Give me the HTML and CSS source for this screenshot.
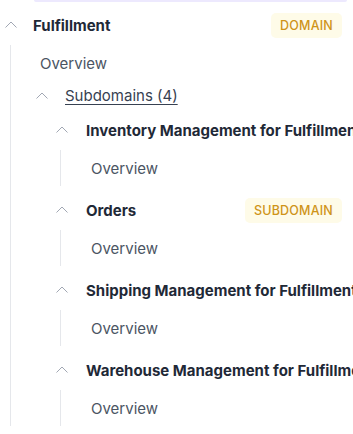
FILE: index.html
```html
<!DOCTYPE html>
<html lang="en">
<head>
    <meta charset="UTF-8">
    <meta name="viewport" content="width=device-width, initial-scale=1.0">
    <title>Fulfillment</title>
    <link rel="stylesheet" href="styles.css">
</head>
<body>
    <div class="prev-item"></div>

    <div class="tree">
        <div class="node">
            <div class="node-row domain-row">
                <span class="toggle">
                    <svg viewBox="0 0 16 16"><path d="M2.5 10.5 L8 5 L13.5 10.5"/></svg>
                </span>
                <span class="node-title">Fulfillment</span>
                <span class="badge">Domain</span>
            </div>

            <div class="children">
                <a class="leaf domain-leaf" href="#">Overview</a>

                <div class="group">
                    <div class="group-row">
                        <span class="toggle">
                            <svg viewBox="0 0 16 16"><path d="M2.5 10.5 L8 5 L13.5 10.5"/></svg>
                        </span>
                        <a class="group-link" href="#">Subdomains (4)</a>
                    </div>

                    <div class="group-items">
                        <div class="sub-node">
                            <div class="node-row sub-row">
                                <span class="toggle">
                                    <svg viewBox="0 0 16 16"><path d="M2.5 10.5 L8 5 L13.5 10.5"/></svg>
                                </span>
                                <span class="node-title">Inventory Management for Fulfillment</span>
                                <span class="badge">Subdomain</span>
                            </div>
                            <div class="sub-children">
                                <a class="leaf" href="#">Overview</a>
                            </div>
                        </div>

                        <div class="sub-node">
                            <div class="node-row sub-row">
                                <span class="toggle">
                                    <svg viewBox="0 0 16 16"><path d="M2.5 10.5 L8 5 L13.5 10.5"/></svg>
                                </span>
                                <span class="node-title">Orders</span>
                                <span class="badge">Subdomain</span>
                            </div>
                            <div class="sub-children">
                                <a class="leaf" href="#">Overview</a>
                            </div>
                        </div>

                        <div class="sub-node">
                            <div class="node-row sub-row">
                                <span class="toggle">
                                    <svg viewBox="0 0 16 16"><path d="M2.5 10.5 L8 5 L13.5 10.5"/></svg>
                                </span>
                                <span class="node-title">Shipping Management for Fulfillment</span>
                                <span class="badge">Subdomain</span>
                            </div>
                            <div class="sub-children">
                                <a class="leaf" href="#">Overview</a>
                            </div>
                        </div>

                        <div class="sub-node">
                            <div class="node-row sub-row">
                                <span class="toggle">
                                    <svg viewBox="0 0 16 16"><path d="M2.5 10.5 L8 5 L13.5 10.5"/></svg>
                                </span>
                                <span class="node-title">Warehouse Management for Fulfillment</span>
                                <span class="badge">Subdomain</span>
                            </div>
                            <div class="sub-children">
                                <a class="leaf" href="#">Overview</a>
                            </div>
                        </div>
                    </div>
                </div>
            </div>
        </div>
    </div>
</body>
</html>
```

FILE: styles.css
```css
html, body {
    overflow: hidden;
}
body {
    font-family: Inter, "Noto Sans", sans-serif;
    margin: 0;
    background-color: white;
    color: #1f2937;
    width: 353px;
}
a {
    text-decoration: none;
    color: inherit;
}
.prev-item {
    height: 2px;
    margin: 0 6px 0 34px;
    background-color: #ede9fe;
    border-radius: 0 0 6px 6px;
}
.tree {
    padding: 7px 11px 0 0;
}
.node-row {
    display: flex;
    align-items: center;
    height: 32px;
}
.toggle {
    flex-shrink: 0;
    width: 22px;
    height: 16px;
    display: flex;
    justify-content: center;
}
.toggle svg {
    width: 16px;
    height: 16px;
    fill: none;
    stroke: #a1a7b3;
    stroke-width: 1;
}
.node-title {
    flex-shrink: 0;
    white-space: nowrap;
    font-size: 15px;
    font-weight: 700;
    color: #1f2937;
}
.badge {
    flex-shrink: 0;
    margin-left: auto;
    padding: 0 9px;
    height: 25px;
    line-height: 25px;
    border-radius: 5px;
    background-color: #fefbe8;
    color: #cf9419;
    font-size: 12.5px;
    font-weight: 500;
    text-transform: uppercase;
    letter-spacing: 0.2px;
}
.domain-row .node-title {
    margin-left: 11px;
}
.children {
    margin: 4px 0 0 10px;
    border-left: 1px solid #e5e7eb;
    padding-left: 20px;
}
.leaf {
    display: flex;
    align-items: center;
    height: 36px;
    font-size: 15px;
    color: #4b5563;
}
.domain-leaf {
    padding-left: 9px;
}
.group-row {
    display: flex;
    align-items: center;
    height: 29px;
}
.group-link {
    margin-left: 12px;
    font-size: 15px;
    color: #374151;
    text-decoration: underline;
    text-underline-offset: 3px;
}
.group-items {
    margin-top: 4px;
    padding-left: 20px;
}
.sub-row {
    margin-right: -11px;
    padding-right: 11px;
}
.sub-row .node-title {
    margin-left: 13px;
}
.sub-node {
    margin-bottom: 8px;
}
.sub-children {
    margin: 4px 0 0 9px;
    border-left: 1px solid #e5e7eb;
    padding-left: 30px;
}
```
